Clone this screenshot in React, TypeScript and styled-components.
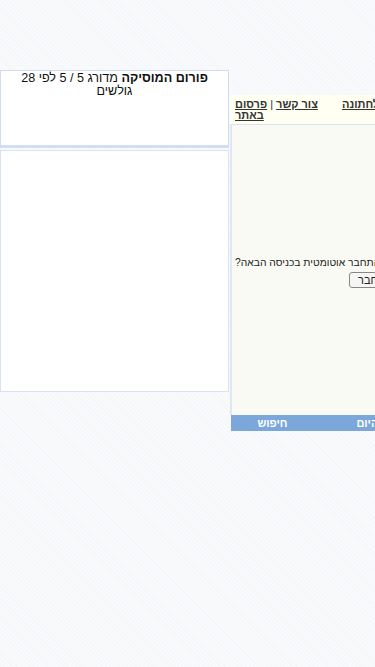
import React from 'react';
import styled, { createGlobalStyle } from 'styled-components';

const GlobalStyle = createGlobalStyle`
  html, body {
    margin: 0;
    padding: 0;
  }
  body {
    font-family: "Liberation Sans", Arial, sans-serif;
    background-color: #f7f8fa;
    background-image: repeating-linear-gradient(
      45deg,
      #f4f6f9 0px,
      #f4f6f9 1px,
      #f9fafb 1px,
      #f9fafb 3px
    );
    min-height: 667px;
  }
`;

const Page = styled.div`
  width: 375px;
  overflow: hidden;
  display: flex;
  align-items: flex-start;
  gap: 1px;
  padding-top: 70px;
`;

const LeftColumn = styled.div`
  width: 229px;
  flex-shrink: 0;
  display: flex;
  flex-direction: column;
  gap: 2px;
`;

const RatingBox = styled.div`
  direction: rtl;
  height: 73px;
  background: #fff;
  border: 1px solid #cddcf0;
  border-bottom: 3px solid #d3dff0;
  padding: 1px 4px 0;
  text-align: center;
  font-size: 12.6px;
  line-height: 13px;
  color: #111;
`;

const ForumName = styled.b`
  font-weight: bold;
`;

const ContentBox = styled.div`
  height: 240px;
  background: #fff;
  border: 1px solid #d8e3f2;
`;

const RightColumn = styled.div`
  margin-top: 25px;
  width: 330px;
  flex-shrink: 0;
  display: flex;
  flex-direction: column;
`;

const LinksBar = styled.div`
  display: flex;
  background: #fffff2;
  height: 29px;
  padding-top: 4px;
  box-sizing: border-box;
`;

const LinkCell = styled.div<{ $width?: number; $pad: number }>`
  direction: rtl;
  text-align: left;
  width: ${p => (p.$width ? `${p.$width}px` : 'auto')};
  flex: ${p => (p.$width ? '0 0 auto' : '1')};
  padding-left: ${p => p.$pad}px;
  font-size: 11px;
  line-height: 11px;
  color: #333;
  white-space: ${p => (p.$width ? 'normal' : 'nowrap')};
`;

const BarLink = styled.a`
  color: #333;
  font-weight: bold;
  text-decoration: underline;
`;

const LoginBox = styled.div`
  height: 290px;
  background: #fafaf5;
  border-top: 1px solid #d9e3f0;
  border-left: 2px solid #dfe7f1;
  display: flex;
  flex-direction: column;
  justify-content: center;
`;

const LoginForm = styled.form`
  direction: rtl;
  text-align: left;
  padding-left: 3px;
  margin-top: 3px;
  font-size: 10.3px;
  color: #222;
`;

const RememberText = styled.div`
  line-height: 13px;
  white-space: nowrap;
`;

const ButtonRow = styled.div`
  padding-left: 114px;
  margin-top: 3px;
`;

const LoginButton = styled.button`
  font-family: "Liberation Sans", Arial, sans-serif;
  font-size: 11px;
  color: #222;
  background: #f6f6f4;
  border: 1px solid #888;
  border-radius: 3px;
  height: 16px;
  line-height: 12px;
  padding: 0 8px;
`;

const NavBar = styled.div`
  display: flex;
  height: 16px;
  background: #7ba7da;
  margin-left: 1px;
`;

const NavCell = styled.div<{ $width: number }>`
  direction: rtl;
  width: ${p => p.$width}px;
  flex-shrink: 0;
  text-align: center;
  color: #fff;
  font-weight: bold;
  font-size: 11px;
  line-height: 16px;
  white-space: nowrap;
`;

export default function App() {
  return (
    <>
      <GlobalStyle />
      <Page>
        <LeftColumn>
          <RatingBox>
            <ForumName>פורום המוסיקה</ForumName> מדורג 5 / 5 לפי 28 גולשים
          </RatingBox>
          <ContentBox />
        </LeftColumn>

        <RightColumn>
          <LinksBar>
            <LinkCell $width={100} $pad={5}>
              <BarLink href="#">צור קשר</BarLink> | <BarLink href="#">פרסום באתר</BarLink>
            </LinkCell>
            <LinkCell $pad={7}>
              <BarLink href="#">ספקים לחתונה</BarLink>
            </LinkCell>
          </LinksBar>

          <LoginBox>
            <LoginForm onSubmit={e => e.preventDefault()}>
              <RememberText>להתחבר אוטומטית בכניסה הבאה?</RememberText>
              <ButtonRow>
                <LoginButton type="submit">התחבר</LoginButton>
              </ButtonRow>
            </LoginForm>
          </LoginBox>

          <NavBar>
            <NavCell $width={83}>חיפוש</NavCell>
            <NavCell $width={145}>הודעות היום</NavCell>
          </NavBar>
        </RightColumn>
      </Page>
    </>
  );
}
